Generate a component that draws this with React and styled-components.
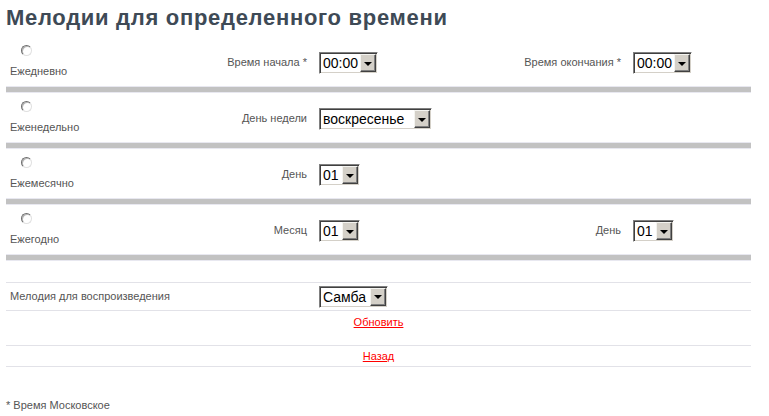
import React from 'react';
import styled, { createGlobalStyle } from 'styled-components';

const GlobalStyle = createGlobalStyle`
    body {
        margin: 0;
        background: #fff;
        font-family: "Liberation Sans", Arial, sans-serif;
    }
`;

const Page = styled.div`
    padding: 6px 6px 0;
    width: 745px;
`;

const Title = styled.h1`
    margin: 0 0 7px;
    font-size: 22px;
    line-height: 24px;
    letter-spacing: 0.7px;
    font-weight: bold;
    color: #3e4a56;
`;

const PeriodRow = styled.div`
    display: grid;
    grid-template-columns: 150px 159px 160px 154px 122px;
    height: 49px;
    align-items: center;
`;

const ModeCell = styled.div`
    align-self: start;
    display: flex;
    flex-direction: column;
    align-items: flex-start;
    padding: 8px 4px 0;
`;

const Radio = styled.span`
    display: block;
    width: 11px;
    height: 11px;
    margin-left: 11px;
    box-sizing: border-box;
    border-radius: 50%;
    border: 1px solid;
    border-color: #6e6e6e #e0e0e0 #e0e0e0 #6e6e6e;
    box-shadow: inset 1px 1px 0 #b8b8b8;
    background: #fff;
`;

const ModeLabel = styled.span`
    margin-top: 9px;
    font-size: 11px;
    line-height: 13px;
    color: #555;
`;

const FieldLabel = styled.div`
    grid-column: ${props => props.$col};
    padding: 2px 8px 0 4px;
    text-align: right;
    font-size: 11px;
    line-height: 13px;
    color: #555;
`;

const FieldValue = styled.div`
    grid-column: ${props => props.$col};
    padding: 3px 4px 0;
    display: flex;
`;

const Divider = styled.div`
    height: 5px;
    background: #c2c2c2;
    border-top: 1px solid #e8e8f0;
    border-bottom: 1px solid #e8e8f0;
`;

const SelectBox = styled.div`
    display: flex;
    align-items: stretch;
    box-sizing: border-box;
    width: ${props => props.$width}px;
    height: 22px;
    border-style: solid;
    border-width: 1px;
    border-color: #808080 #ffffff #ffffff #808080;
    box-shadow: inset 1px 1px 0 #404040, inset -1px -1px 0 #d4d0c8;
    background: #fff;
    padding: 1px;
`;

const SelectText = styled.span`
    flex: 1;
    padding: 0 3px 0 2px;
    font-size: 14px;
    line-height: 18px;
    color: #000;
    white-space: nowrap;
    overflow: hidden;
`;

const SelectButton = styled.span`
    width: 16px;
    flex: none;
    box-sizing: border-box;
    background: #d4d0c8;
    border-style: solid;
    border-width: 1px;
    border-color: #f4f4f0 #404040 #404040 #f4f4f0;
    box-shadow: inset -1px -1px 0 #808080;
    display: flex;
    align-items: center;
    justify-content: center;

    &::after {
        content: '';
        border-left: 4px solid transparent;
        border-right: 4px solid transparent;
        border-top: 4px solid #000;
        margin-top: 1px;
    }
`;

const Select = ({ value, width }) => (
    <SelectBox $width={width}>
        <SelectText>{value}</SelectText>
        <SelectButton />
    </SelectBox>
);

const Spacer = styled.div`
    height: 21px;
`;

const Lines = styled.div`
    border-top: 1px solid #e2e2e8;
`;

const MelodyRow = styled.div`
    display: grid;
    grid-template-columns: 309px auto;
    align-items: center;
    height: 27px;
    border-bottom: 1px solid #e2e2e8;

    ${FieldValue} {
        padding-top: 0;
    }
`;

const MelodyLabel = styled.div`
    padding: 0 4px;
    font-size: 11px;
    line-height: 13px;
    color: #555;
`;

const LinkRow = styled.div`
    height: ${props => props.$height}px;
    padding-top: ${props => props.$top}px;
    box-sizing: border-box;
    text-align: center;
    border-bottom: 1px solid #e2e2e8;
    font-size: 11px;
    line-height: 13px;
`;

const Link = styled.a`
    color: #ff0000;
    text-decoration: underline;
`;

const Footnote = styled.div`
    margin-top: 32px;
    font-size: 11px;
    line-height: 13px;
    color: #555;
`;

const periods = [
    {
        mode: 'Ежедневно',
        fields: [
            { label: 'Время начала *', value: '00:00', width: 59 },
            { label: 'Время окончания *', value: '00:00', width: 59 },
        ],
    },
    {
        mode: 'Еженедельно',
        fields: [{ label: 'День недели', value: 'воскресенье', width: 113 }],
    },
    {
        mode: 'Ежемесячно',
        fields: [{ label: 'День', value: '01', width: 41 }],
    },
    {
        mode: 'Ежегодно',
        fields: [
            { label: 'Месяц', value: '01', width: 41 },
            { label: 'День', value: '01', width: 41 },
        ],
    },
];

export default function App() {
    return (
        <Page>
            <GlobalStyle />
            <Title>Мелодии для определенного времени</Title>
            {periods.map(period => (
                <React.Fragment key={period.mode}>
                    <PeriodRow>
                        <ModeCell>
                            <Radio />
                            <ModeLabel>{period.mode}</ModeLabel>
                        </ModeCell>
                        {period.fields.map((field, i) => (
                            <React.Fragment key={i}>
                                <FieldLabel $col={i * 2 + 2}>{field.label}</FieldLabel>
                                <FieldValue $col={i * 2 + 3}>
                                    <Select value={field.value} width={field.width} />
                                </FieldValue>
                            </React.Fragment>
                        ))}
                    </PeriodRow>
                    <Divider />
                </React.Fragment>
            ))}
            <Spacer />
            <Lines>
                <MelodyRow>
                    <MelodyLabel>Мелодия для воспроизведения</MelodyLabel>
                    <FieldValue>
                        <Select value="Самба" width={69} />
                    </FieldValue>
                </MelodyRow>
                <LinkRow $height={35} $top={5}>
                    <Link href="#">Обновить</Link>
                </LinkRow>
                <LinkRow $height={21} $top={4}>
                    <Link href="#">Назад</Link>
                </LinkRow>
            </Lines>
            <Footnote>* Время Московское</Footnote>
        </Page>
    );
}
